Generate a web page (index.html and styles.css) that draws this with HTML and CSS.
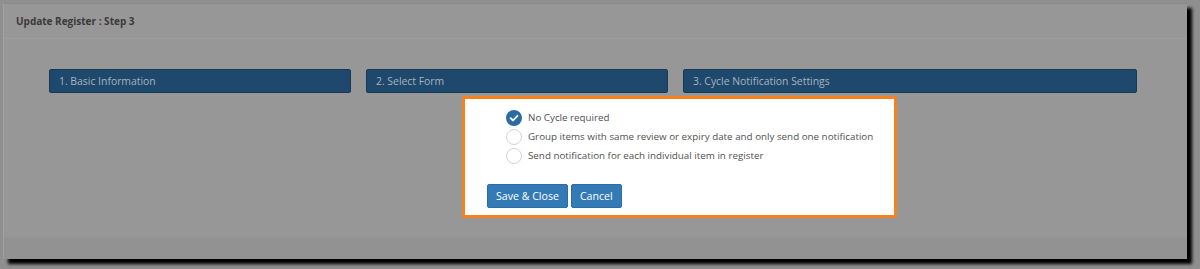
FILE: index.html
```html
<!DOCTYPE html>
<html lang="en">
<head>
    <meta charset="UTF-8">
    <title>Update Register : Step 3</title>
    <link rel="stylesheet" href="styles.css">
</head>
<body>
    <div class="window">
        <div class="panel-heading">Update Register : Step 3</div>
        <div class="panel-body">
            <div class="steps">
                <div class="step">1. Basic Information</div>
                <div class="step">2. Select Form</div>
                <div class="step">3. Cycle Notification Settings</div>
            </div>
        </div>
        <div class="panel-footer"></div>
    </div>

    <div class="modal">
        <div class="options">
            <label class="option">
                <span class="radio checked">
                    <svg width="16" height="16" viewBox="0 0 16 16"><circle cx="8" cy="8" r="8" fill="#2c6aa5"/><path d="M4.6 8.2 L7 10.5 L11.4 5.8" fill="none" stroke="#fff" stroke-width="1.8" stroke-linecap="round" stroke-linejoin="round"/></svg>
                </span>
                No Cycle required
            </label>
            <label class="option">
                <span class="radio"></span>
                Group items with same review or expiry date and only send one notification
            </label>
            <label class="option">
                <span class="radio"></span>
                Send notification for each individual item in register
            </label>
        </div>
        <div class="actions">
            <button type="button" class="btn">Save &amp; Close</button>
            <button type="button" class="btn">Cancel</button>
        </div>
    </div>
</body>
</html>
```

FILE: styles.css
```css
body {
    margin: 0;
    background: #8f8f8f;
    font-family: "Open Sans", Arial, sans-serif;
    height: 269px;
    overflow: hidden;
}
.window {
    margin: 3px 0 0 3px;
    width: 1184px;
    height: 256px;
    background: #979797;
    border-top: 1px solid #8a8a8a;
    border-left: 1px solid #a2a2a2;
    box-sizing: border-box;
    box-shadow: 5px 5px 3px #000;
    display: flex;
    flex-direction: column;
}
.panel-heading {
    height: 35px;
    line-height: 35px;
    padding-left: 12px;
    font-size: 10px;
    font-weight: bold;
    color: #3a3a3a;
    border-bottom: 1px solid #9e9e9e;
    box-sizing: border-box;
}
.panel-body {
    flex: 1;
    padding-top: 30px;
    padding-left: 45px;
}
.steps {
    display: grid;
    grid-template-columns: 302px 302px 454px;
    gap: 15px;
}
.step {
    height: 24px;
    line-height: 22px;
    padding-left: 9px;
    background: #1e486c;
    border: 1px solid #17395a;
    border-radius: 2px;
    box-sizing: border-box;
    color: #a9b4bf;
    font-size: 10.4px;
}
.panel-footer {
    height: 21px;
    background: #929292;
    border-top: 1px solid #949494;
}
.modal {
    position: absolute;
    left: 462px;
    top: 96px;
    width: 435px;
    height: 122px;
    box-sizing: border-box;
    background: #fff;
    border: 3px solid #f5821f;
    border-radius: 3px;
    padding: 9px 0 0 22px;
}
.options {
    padding-left: 19px;
}
.option {
    display: flex;
    align-items: center;
    gap: 6px;
    height: 19px;
    font-size: 9.8px;
    color: #505050;
    white-space: nowrap;
}
.radio {
    width: 16px;
    height: 16px;
    border-radius: 50%;
    border: 1px solid #d4d4d4;
    box-sizing: border-box;
    display: inline-block;
}
.radio.checked {
    border: none;
}
.radio svg {
    display: block;
}
.actions {
    margin-top: 19px;
    display: flex;
    gap: 3px;
}
.btn {
    height: 24px;
    padding: 0 8px;
    background: #337ab7;
    border: 1px solid #2e6da4;
    border-radius: 2px;
    color: #fff;
    font-family: "Open Sans", Arial, sans-serif;
    font-size: 10.6px;
}
```
